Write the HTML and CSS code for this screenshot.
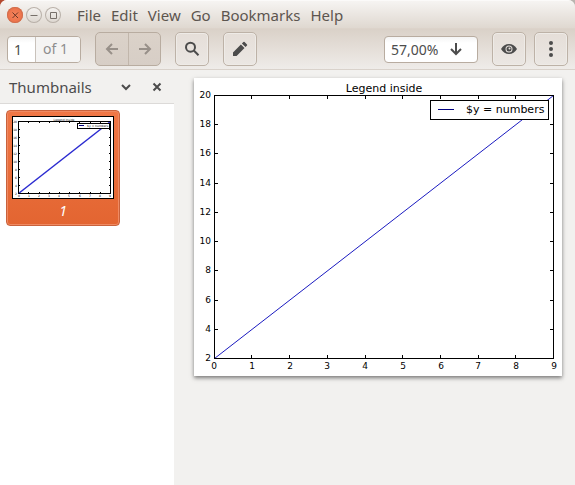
FILE: index.html
```html
<!DOCTYPE html>
<html lang="en">
<head>
    <meta charset="UTF-8">
    <meta name="viewport" content="width=device-width, initial-scale=1.0">
    <title>Document Viewer</title>
    <link rel="stylesheet" href="styles.css">
</head>
<body>
    <div class="window">
        <header class="titlebar">
            <div class="window-buttons">
                <button class="window-button close" aria-label="Close">
                    <svg width="16" height="16" viewBox="0 0 16 16"><path d="M5.5 5.5l5.500 5.500M11 5.500l-5.500 5.500"/></svg>
                </button>
                <button class="window-button" aria-label="Minimize">
                    <svg width="16" height="16" viewBox="0 0 16 16"><path d="M4.5 8.5h7"/></svg>
                </button>
                <button class="window-button" aria-label="Maximize">
                    <svg width="16" height="16" viewBox="0 0 16 16"><path d="M5.5 5.5h6v6h-6z"/></svg>
                </button>
            </div>
            <nav class="menu">
                <button>File</button>
                <button>Edit</button>
                <button>View</button>
                <button>Go</button>
                <button>Bookmarks</button>
                <button>Help</button>
            </nav>
        </header>

        <div class="toolbar">
            <div class="field page-field">
                <input class="page-input" type="text" value="1" aria-label="Page">
                <span class="page-total">of 1</span>
            </div>
            <div class="nav-buttons">
                <button class="nav-button" aria-label="Previous page" disabled>
                    <svg width="16" height="16" viewBox="0 0 16 16"><path d="M14 8H3M8 3L3 8l5 5"/></svg>
                </button>
                <button class="nav-button" aria-label="Next page" disabled>
                    <svg width="16" height="16" viewBox="0 0 16 16"><path d="M2 8h11M8 3l5 5-5 5"/></svg>
                </button>
            </div>
            <button class="tool-button" aria-label="Find">
                <svg width="16" height="16" viewBox="0 0 16 16"><circle cx="6.5" cy="6.2" r="4.5" class="stroke"/><path d="M9.8 9.5l4.7 4.7" class="stroke"/></svg>
            </button>
            <button class="tool-button" aria-label="Annotate">
                <svg width="16" height="16" viewBox="0 0 16 16"><path d="M1 15v-3.6l7.9-7.9 3.6 3.6L4.6 15zM9.9 2.5l1.5-1.5q.6-.4 1.2 0L15 3.4q.4.6 0 1.2l-1.5 1.5z"/></svg>
            </button>
            <div class="field zoom-field">
                <input class="zoom-input" type="text" value="57,00%" aria-label="Zoom">
                <button class="zoom-button" aria-label="Choose zoom">
                    <svg width="16" height="16" viewBox="0 0 16 16"><path d="M8 2v10M3 8l5 5 5-5"/></svg>
                </button>
            </div>
            <button class="tool-button" aria-label="View options">
                <svg width="16" height="16" viewBox="0 0 16 16"><path fill-rule="evenodd" d="M0 8Q3 3 8 3t8 5q-3 5-8 5T0 8zM8 4.5a3.500 3.500 0 1 0 0 7a3.500 3.500 0 1 0 0-7z"/><path fill-rule="evenodd" d="M8 5.5a2.500 2.500 0 1 0 0 5a2.500 2.500 0 1 0 0-5zM8.5 6.5a1 1 0 1 0 0 2a1 1 0 1 0 0-2z"/></svg>
            </button>
            <button class="tool-button menu-button" aria-label="File options">
                <svg width="16" height="16" viewBox="0 0 16 16"><circle cx="8" cy="2" r="2"/><circle cx="8" cy="8" r="2"/><circle cx="8" cy="14" r="2"/></svg>
            </button>
        </div>

        <div class="content">
            <aside class="sidebar">
                <div class="sidebar-header">
                    <h2>Thumbnails</h2>
                    <button class="sidebar-button" aria-label="Choose side pane">
                        <svg width="16" height="16" viewBox="0 0 16 16"><path d="M4 6l4 4 4-4"/></svg>
                    </button>
                    <button class="sidebar-button" aria-label="Hide side pane">
                        <svg width="16" height="16" viewBox="0 0 16 16"><path d="M4.5 4.5l7 7M11.5 4.5l-7 7"/></svg>
                    </button>
                </div>
                <div class="thumbnails">
                    <a class="thumbnail" href="#page-1">
                        <svg class="thumbnail-image" viewBox="0 0 102 83">
                            <rect class="sheet-edge" x="0.5" y="0.5" width="101" height="82"/>
                            <path class="data-line" d="M6.5 77.5L98.5 5.5"/>
                            <rect class="axes" x="6.5" y="5.5" width="92" height="72"/>
                            <path class="ticks" d="M16.5 77v-1M27.5 77v-1M37.5 77v-1M47.5 77v-1M57.5 77v-1M67.5 77v-1M78.5 77v-1M88.5 77v-1M16.5 6v1M27.5 6v1M37.5 6v1M47.5 6v1M57.5 6v1M67.5 6v1M78.5 6v1M88.5 6v1M7 69.5h1M7 61.5h1M7 53.5h1M7 45.5h1M7 37.5h1M7 29.5h1M7 21.5h1M7 13.5h1M98 69.5h-1M98 61.5h-1M98 53.5h-1M98 45.5h-1M98 37.5h-1M98 29.5h-1M98 21.5h-1M98 13.5h-1"/>
                            <rect class="legend" x="65.5" y="7.5" width="32" height="5"/>
                            <path class="legend-line" d="M67 9.5h5"/>
                            <g class="labels">
                                <text x="52" y="5" class="middle">Legend inside</text>
                                <text x="75" y="11">$y = numbers</text>
                            </g>
                            <g class="labels end">
                                <text x="5" y="7">20</text>
                                <text x="5" y="15">18</text>
                                <text x="5" y="23">16</text>
                                <text x="5" y="31">14</text>
                                <text x="5" y="39">12</text>
                                <text x="5" y="47">10</text>
                                <text x="5" y="55">8</text>
                                <text x="5" y="63">6</text>
                                <text x="5" y="71">4</text>
                                <text x="5" y="79">2</text>
                            </g>
                            <g class="labels middle">
                                <text x="7" y="81">0</text>
                                <text x="17" y="81">1</text>
                                <text x="27" y="81">2</text>
                                <text x="37" y="81">3</text>
                                <text x="47" y="81">4</text>
                                <text x="57" y="81">5</text>
                                <text x="68" y="81">6</text>
                                <text x="78" y="81">7</text>
                                <text x="88" y="81">8</text>
                                <text x="98" y="81">9</text>
                            </g>
                        </svg>
                        <span class="thumbnail-label">1</span>
                    </a>
                </div>
            </aside>

            <main class="document">
                <svg class="sheet" id="page-1" viewBox="0 0 368 298">
                    <path class="data-line" d="M20.5 280.5L359.5 17.5"/>
                    <rect class="axes" x="20.5" y="17.5" width="339" height="263"/>
                    <path class="ticks" d="M57.5 280v-3M95.5 280v-3M133.5 280v-3M171.5 280v-3M208.5 280v-3M246.5 280v-3M284.5 280v-3M321.5 280v-3M57.5 18v3M95.5 18v3M133.5 18v3M171.5 18v3M208.5 18v3M246.5 18v3M284.5 18v3M321.5 18v3"/>
                    <path class="ticks" d="M21 251.5h3M21 222.5h3M21 192.5h3M21 163.5h3M21 134.5h3M21 105.5h3M21 75.5h3M21 46.5h3M359 251.5h-3M359 222.5h-3M359 192.5h-3M359 163.5h-3M359 134.5h-3M359 105.5h-3M359 75.5h-3M359 46.5h-3"/>
                    <rect class="legend" x="236.5" y="22.5" width="118" height="19"/>
                    <path class="legend-line" d="M244 31.5h16"/>
                    <g class="title">
                        <text x="190" y="14" class="middle">Legend inside</text>
                        <text x="272" y="35">$y = numbers</text>
                    </g>
                    <g class="labels end">
                        <text x="17" y="20">20</text>
                        <text x="17" y="49">18</text>
                        <text x="17" y="78">16</text>
                        <text x="17" y="108">14</text>
                        <text x="17" y="137">12</text>
                        <text x="17" y="166">10</text>
                        <text x="17" y="195">8</text>
                        <text x="17" y="225">6</text>
                        <text x="17" y="254">4</text>
                        <text x="17" y="283">2</text>
                    </g>
                    <g class="labels middle">
                        <text x="20" y="291">0</text>
                        <text x="58" y="291">1</text>
                        <text x="96" y="291">2</text>
                        <text x="133" y="291">3</text>
                        <text x="171" y="291">4</text>
                        <text x="209" y="291">5</text>
                        <text x="247" y="291">6</text>
                        <text x="284" y="291">7</text>
                        <text x="322" y="291">8</text>
                        <text x="360" y="291">9</text>
                    </g>
                </svg>
            </main>
        </div>
    </div>
</body>
</html>
```

FILE: styles.css
```css
* {
    box-sizing: border-box;
}
body {
    margin: 0;
    background: linear-gradient(to right, #b4492f, #b9b5b0);
    color: #4c4c4c;
    font-family: "Noto Sans", "Open Sans", sans-serif;
    font-size: 14px;
}
button, input {
    margin: 0;
    padding: 0;
    border: none;
    background: none;
    color: inherit;
    font: inherit;
}
button svg {
    display: block;
    fill: currentColor;
}
.window {
    display: flex;
    flex-direction: column;
    min-height: 100vh;
    border-radius: 7px 7px 0 0;
    background-color: #f2f1ef;
    overflow: hidden;
}

/* title bar and menu */
.titlebar {
    display: flex;
    align-items: center;
    gap: 16px;
    height: 29px;
    padding: 0 7px;
    border-top: 1px solid #fbfaf9;
    border-bottom: 1px solid #dcd3ca;
    background: linear-gradient(#f6f4f2, #dfd8d0);
}
.window-buttons {
    display: flex;
    gap: 3px;
}
.window-button {
    border-radius: 50%;
    background: linear-gradient(#f6f4f2, #dcd6cf);
    box-shadow: 0 0 0 1px #b9b1a9 inset;
    color: #77706a;
}
.window-button svg {
    fill: none;
    stroke: currentColor;
}
.window-button.close {
    background: radial-gradient(#f4845d, #e9683f);
    box-shadow: 0 0 0 1px #cf704f inset;
    color: #6b3524;
}
.menu {
    display: flex;
    gap: 10px;
    color: #5c554f;
    font-size: 15px;
}

/* toolbar */
.toolbar {
    display: flex;
    align-items: center;
    gap: 14px;
    height: 41px;
    padding: 0 7px;
    border-bottom: 1px solid #d9d2cb;
    background: linear-gradient(#dad1c8, #efece9);
}
.field {
    display: flex;
    align-items: center;
    height: 27px;
    border: 1px solid #b8aca0;
    border-radius: 4px;
    background: linear-gradient(#f4f4f4, #ffffff 6px);
    overflow: hidden;
}
.page-field {
    width: 74px;
}
.page-input {
    width: 28px;
    height: 100%;
    padding-left: 6px;
    border-right: 1px solid #c9c2bb;
}
.page-total {
    flex: 1;
    height: 100%;
    padding-left: 7px;
    background-color: #f5f4f3;
    color: #8e8e8e;
    line-height: 24px;
}
.nav-buttons {
    display: flex;
    height: 34px;
    border: 1px solid #b8aca0;
    border-radius: 5px;
    background: linear-gradient(#dbd2c9, #d7cec6);
}
.nav-button {
    width: 32px;
    padding: 0 8px;
    color: #989089;
}
.nav-button + .nav-button {
    border-left: 1px solid #c1b6ab;
}
.nav-button svg, .zoom-button svg, .sidebar-button svg {
    fill: none;
    stroke: currentColor;
    stroke-width: 2;
}
.tool-button {
    width: 34px;
    height: 34px;
    padding: 0 8px;
    border: 1px solid #bdb2a7;
    border-radius: 5px;
    background: linear-gradient(#e5ded8, #ebe7e3);
    box-shadow: 0 0 0 1px #eeebe7 inset;
}
.tool-button .stroke {
    fill: none;
    stroke: currentColor;
    stroke-width: 2;
}
.zoom-field {
    width: 94px;
    margin-left: auto;
}
.zoom-input {
    width: 55px;
    padding-left: 6px;
}
.zoom-button {
    margin-left: 8px;
}
.menu-button {
    margin-left: -6px;
}

/* side pane */
.content {
    display: flex;
    flex: 1;
}
.sidebar {
    display: flex;
    flex-direction: column;
    width: 174px;
}
.sidebar-header {
    display: flex;
    align-items: center;
    gap: 15px;
    height: 34px;
    padding: 0 9px;
    border-bottom: 1px solid #dcdad8;
}
.sidebar-header h2 {
    flex: 1;
    margin: 0;
    font-size: 15px;
    font-weight: normal;
}
.thumbnails {
    flex: 1;
    padding: 6px;
    background-color: #ffffff;
}
.thumbnail {
    display: flex;
    flex-direction: column;
    align-items: center;
    width: 114px;
    padding: 5px 5px 3px;
    border: 1px solid #c9623c;
    border-radius: 4px;
    background: linear-gradient(#f07746, #e36531);
    box-shadow: 0 0 0 1px #f08a62 inset;
    color: #ffffff;
    text-decoration: none;
}
.thumbnail-image {
    display: block;
    width: 100%;
    background-color: #ffffff;
}
.thumbnail-label {
    font-style: italic;
    line-height: 23px;
}

/* page with the plot */
.document {
    flex: 1;
    padding: 8px 13px 20px 20px;
}
.sheet {
    display: block;
    width: 100%;
    background-color: #ffffff;
    box-shadow: 0 2px 4px rgba(0, 0, 0, 0.5);
}
.sheet, .thumbnail-image {
    font-family: "DejaVu Sans", sans-serif;
}
.axes, .ticks, .sheet-edge {
    fill: none;
    stroke: #000000;
}
.legend {
    fill: #ffffff;
    stroke: #000000;
}
.data-line {
    fill: none;
    stroke: #1a1ac0;
}
.legend-line {
    stroke: #00007f;
}
.title {
    font-size: 11px;
}
.labels {
    font-size: 9px;
}
.thumbnail-image .labels {
    font-size: 3px;
}
.thumbnail-image .data-line {
    stroke: #2a2ad0;
    stroke-width: 1.5;
}
.middle {
    text-anchor: middle;
}
.end {
    text-anchor: end;
}
```
